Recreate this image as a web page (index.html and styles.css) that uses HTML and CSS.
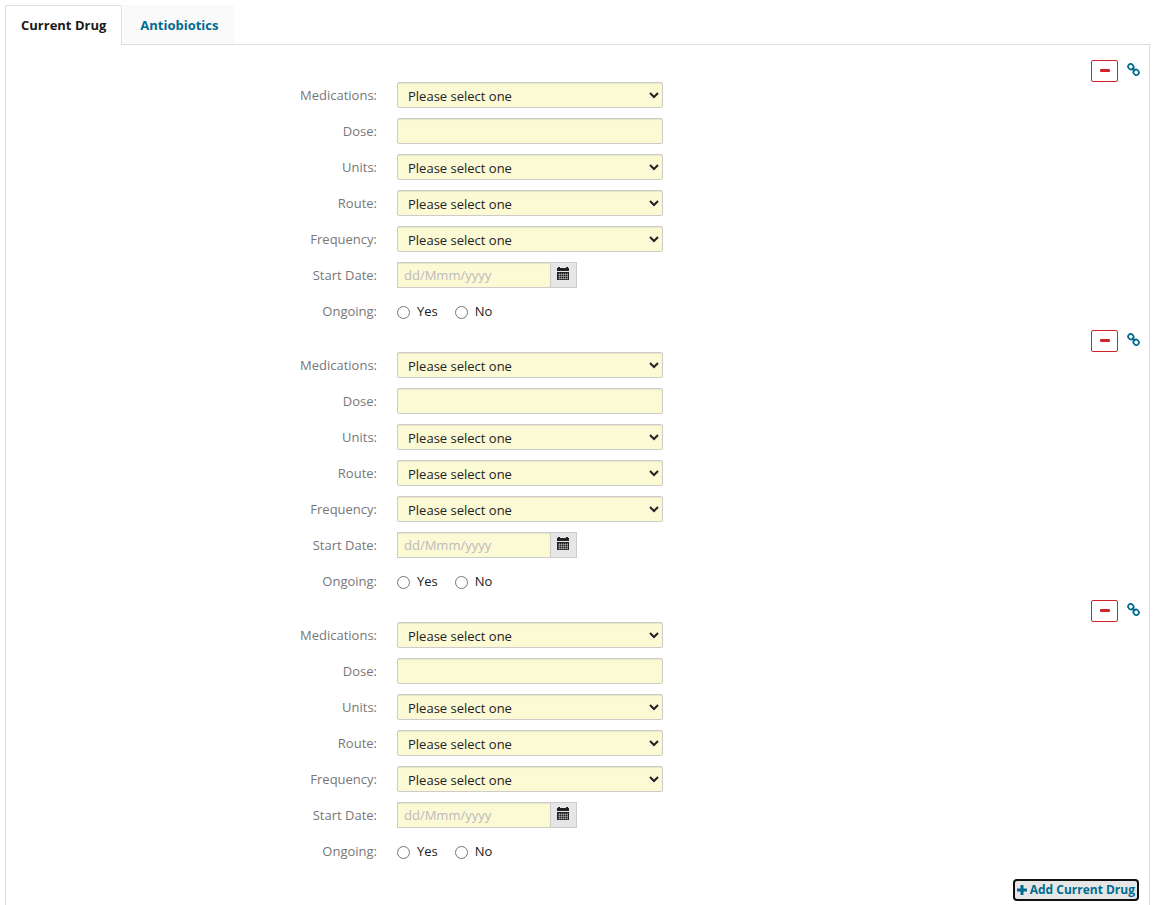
FILE: index.html
```html
<!DOCTYPE html>
<html lang="en">
<head>
<meta charset="utf-8">
<title>Current Drug</title>
<link rel="stylesheet" href="styles.css">
</head>
<body>
<svg class="sprite" aria-hidden="true">
  <symbol id="icon-minus" viewBox="0 0 10 10"><rect x="0" y="3" width="10" height="3" rx="1" fill="currentColor"/></symbol>
  <symbol id="icon-plus" viewBox="0 0 10 10"><path d="M4 0h2q.5 0 .5.5v3h3q.5 0 .5.5v2q0 .5-.5.5h-3v3q0 .5-.5.5H4q-.5 0-.5-.5v-3h-3Q0 6.500 0 6V4q0-.5.5-.5h3v-3Q3.500 0 4 0z" fill="currentColor"/></symbol>
  <symbol id="icon-link" viewBox="0 0 12 12"><g fill="none" stroke="currentColor" stroke-width="1.600"><rect x="1" y="1.200" width="5.200" height="4.600" rx="2.200" transform="rotate(45 3.600 3.500)"/><rect x="5.800" y="6.200" width="5.200" height="4.600" rx="2.200" transform="rotate(45 8.400 8.500)"/><path d="M4.500 4.500L7.500 7.500"/></g></symbol>
  <symbol id="icon-calendar" viewBox="0 0 14 14"><path d="M2 0h2v1h6V0h2v1h1v3H1V1h1z" fill="currentColor"/><path d="M1 5h12v7.500q0 .5-.5.5h-11q-.5 0-.5-.5z" fill="currentColor"/><path d="M2 7.500h10M2 9.500h10M2 11.500h10M3.500 6v6.500M5.500 6v6.500M7.500 6v6.500M9.500 6v6.500M11.500 6v6.500" stroke="#e6e6e6" stroke-width=".4"/></symbol>
</svg>

<div class="tabs" role="tablist">
  <button class="tab tab-active" type="button" role="tab" aria-selected="true">Current Drug</button>
  <button class="tab" type="button" role="tab" aria-selected="false">Antiobiotics</button>
</div>

<form class="panel">
  <section class="entry">
    <div class="entry-actions">
      <button class="remove" type="button" aria-label="Remove drug"><svg class="icon-minus"><use href="#icon-minus"/></svg></button>
      <a class="permalink" href="#drug-1" aria-label="Link to drug"><svg class="icon-link"><use href="#icon-link"/></svg></a>
    </div>
    <div class="fields" id="drug-1">
      <div class="row"><label class="label" for="med-1">Medications:</label><div class="cell"><select class="control select" id="med-1"><option>Please select one</option></select></div></div>
      <div class="row"><label class="label" for="dose-1">Dose:</label><div class="cell"><input class="control" id="dose-1" type="text"></div></div>
      <div class="row"><label class="label" for="units-1">Units:</label><div class="cell"><select class="control select" id="units-1"><option>Please select one</option></select></div></div>
      <div class="row"><label class="label" for="route-1">Route:</label><div class="cell"><select class="control select" id="route-1"><option>Please select one</option></select></div></div>
      <div class="row"><label class="label" for="freq-1">Frequency:</label><div class="cell"><select class="control select" id="freq-1"><option>Please select one</option></select></div></div>
      <div class="row"><label class="label" for="start-1">Start Date:</label><div class="cell date"><input class="control date-input" id="start-1" type="text" placeholder="dd/Mmm/yyyy"><button class="date-button" type="button" aria-label="Pick a date"><svg class="icon-calendar"><use href="#icon-calendar"/></svg></button></div></div>
      <div class="row" role="radiogroup" aria-labelledby="ongoing-1"><span class="label" id="ongoing-1">Ongoing:</span><div class="cell choices"><label class="choice"><input class="radio" type="radio" name="ongoing-1">Yes</label><label class="choice"><input class="radio" type="radio" name="ongoing-1">No</label></div></div>
    </div>
  </section>

  <section class="entry">
    <div class="entry-actions">
      <button class="remove" type="button" aria-label="Remove drug"><svg class="icon-minus"><use href="#icon-minus"/></svg></button>
      <a class="permalink" href="#drug-2" aria-label="Link to drug"><svg class="icon-link"><use href="#icon-link"/></svg></a>
    </div>
    <div class="fields" id="drug-2">
      <div class="row"><label class="label" for="med-2">Medications:</label><div class="cell"><select class="control select" id="med-2"><option>Please select one</option></select></div></div>
      <div class="row"><label class="label" for="dose-2">Dose:</label><div class="cell"><input class="control" id="dose-2" type="text"></div></div>
      <div class="row"><label class="label" for="units-2">Units:</label><div class="cell"><select class="control select" id="units-2"><option>Please select one</option></select></div></div>
      <div class="row"><label class="label" for="route-2">Route:</label><div class="cell"><select class="control select" id="route-2"><option>Please select one</option></select></div></div>
      <div class="row"><label class="label" for="freq-2">Frequency:</label><div class="cell"><select class="control select" id="freq-2"><option>Please select one</option></select></div></div>
      <div class="row"><label class="label" for="start-2">Start Date:</label><div class="cell date"><input class="control date-input" id="start-2" type="text" placeholder="dd/Mmm/yyyy"><button class="date-button" type="button" aria-label="Pick a date"><svg class="icon-calendar"><use href="#icon-calendar"/></svg></button></div></div>
      <div class="row" role="radiogroup" aria-labelledby="ongoing-2"><span class="label" id="ongoing-2">Ongoing:</span><div class="cell choices"><label class="choice"><input class="radio" type="radio" name="ongoing-2">Yes</label><label class="choice"><input class="radio" type="radio" name="ongoing-2">No</label></div></div>
    </div>
  </section>

  <section class="entry">
    <div class="entry-actions">
      <button class="remove" type="button" aria-label="Remove drug"><svg class="icon-minus"><use href="#icon-minus"/></svg></button>
      <a class="permalink" href="#drug-3" aria-label="Link to drug"><svg class="icon-link"><use href="#icon-link"/></svg></a>
    </div>
    <div class="fields" id="drug-3">
      <div class="row"><label class="label" for="med-3">Medications:</label><div class="cell"><select class="control select" id="med-3"><option>Please select one</option></select></div></div>
      <div class="row"><label class="label" for="dose-3">Dose:</label><div class="cell"><input class="control" id="dose-3" type="text"></div></div>
      <div class="row"><label class="label" for="units-3">Units:</label><div class="cell"><select class="control select" id="units-3"><option>Please select one</option></select></div></div>
      <div class="row"><label class="label" for="route-3">Route:</label><div class="cell"><select class="control select" id="route-3"><option>Please select one</option></select></div></div>
      <div class="row"><label class="label" for="freq-3">Frequency:</label><div class="cell"><select class="control select" id="freq-3"><option>Please select one</option></select></div></div>
      <div class="row"><label class="label" for="start-3">Start Date:</label><div class="cell date"><input class="control date-input" id="start-3" type="text" placeholder="dd/Mmm/yyyy"><button class="date-button" type="button" aria-label="Pick a date"><svg class="icon-calendar"><use href="#icon-calendar"/></svg></button></div></div>
      <div class="row" role="radiogroup" aria-labelledby="ongoing-3"><span class="label" id="ongoing-3">Ongoing:</span><div class="cell choices"><label class="choice"><input class="radio" type="radio" name="ongoing-3">Yes</label><label class="choice"><input class="radio" type="radio" name="ongoing-3">No</label></div></div>
    </div>
  </section>

  <div class="footer">
    <button class="add" type="button"><svg class="icon-plus"><use href="#icon-plus"/></svg>Add Current Drug</button>
  </div>
</form>
</body>
</html>
```

FILE: styles.css
```css
* { box-sizing: border-box; }

body {
  margin: 0;
  padding: 5px 5px 0;
  min-height: 100vh;
  display: flex;
  flex-direction: column;
  background: #fff;
  color: #222;
  font: 13px/18px "Open Sans", sans-serif;
}

button, input, select { font: inherit; margin: 0; }
svg { display: block; }
.sprite { position: absolute; width: 0; height: 0; }

.tabs {
  display: flex;
  align-items: flex-start;
  gap: 2px;
  margin-bottom: -1px;
  z-index: 1;
}

.tab {
  height: 39px;
  padding: 0 16px;
  border: 0;
  background: #fafafa;
  color: #006b8f;
  font-weight: 700;
}

.tab-active {
  height: 40px;
  padding: 0 15px 1px;
  border: 1px solid #ddd;
  border-bottom: 0;
  border-radius: 2px 2px 0 0;
  background: #fff;
  color: #1a1a1a;
}

.panel {
  flex: 1;
  border: 1px solid #ddd;
  border-bottom: 0;
  padding: 15px 0 4px;
}

.entry { margin-bottom: 6px; }

.entry-actions {
  display: flex;
  justify-content: flex-end;
  gap: 9px;
  padding-right: 9px;
}

.remove {
  display: flex;
  align-items: center;
  justify-content: center;
  width: 27px;
  height: 22px;
  padding: 0;
  border: 1px solid #d2232a;
  border-radius: 2px;
  background: #fff;
  color: #d2232a;
}

.permalink { padding-top: 3px; color: #006b8f; }

.icon-minus, .icon-plus { width: 10px; height: 10px; }
.icon-link { width: 13px; height: 13px; }
.icon-calendar { width: 14px; height: 14px; }

.fields { display: grid; gap: 10px; }

.row {
  display: grid;
  grid-template-columns: 4fr 3fr 5fr;
  align-items: center;
  min-height: 26px;
}

.label { padding: 0 10px; text-align: right; color: #777; }
.cell { padding: 0 10px; display: flex; }

.control {
  width: 100%;
  height: 26px;
  padding: 0 6px;
  border: 1px solid #ccc;
  border-radius: 2px;
  background-color: #fcf9d5;
  box-shadow: inset 0 1px 1px rgba(0, 0, 0, .08);
  color: #222;
}

.select { padding-top: 2px; }

.date-input { width: 153px; border-right: 0; border-radius: 0; }
.date-input::placeholder { color: #bbb; }

.date-button {
  display: flex;
  align-items: center;
  justify-content: center;
  width: 27px;
  height: 26px;
  padding: 0 1px 2px 0;
  border: 1px solid #ccc;
  background: #e6e6e6;
  color: #222;
}

.choices { gap: 17px; }
.choice { display: flex; align-items: center; gap: 7px; }
.radio { width: 13px; height: 13px; margin-top: 2px; }

.footer {
  display: flex;
  justify-content: flex-end;
  padding: 9px 10px 0 0;
}

.add {
  display: flex;
  align-items: center;
  gap: 3px;
  height: 22px;
  padding: 0 2px;
  border: 2px solid #101010;
  border-radius: 4px;
  background: #e6e6e6;
  color: #006b8f;
  font-size: 12px;
  font-weight: 700;
}
```
